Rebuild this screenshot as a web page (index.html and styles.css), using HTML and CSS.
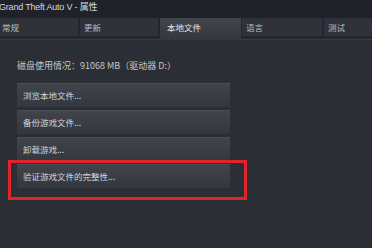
FILE: index.html
```html
<!DOCTYPE html>
<html>
<head>
<meta charset="utf-8">
<link rel="stylesheet" href="styles.css">
</head>
<body>
<div class="win">
  <div class="titlebar">Grand Theft Auto V - 属性</div>
  <div class="tabs">
    <div class="tab t1">常规</div>
    <div class="tab t2">更新</div>
    <div class="tab active">本地文件</div>
    <div class="tab t4">语言</div>
    <div class="tab t5">测试</div>
  </div>
  <div class="content">
    <div class="usage">磁盘使用情况：91068 MB（驱动器 D:）</div>
    <div class="btns">
      <div class="btn">浏览本地文件...</div>
      <div class="btn">备份游戏文件...</div>
      <div class="btn">卸载游戏...</div>
      <div class="btn">验证游戏文件的完整性...</div>
    </div>
    <div class="highlight"></div>
  </div>
</div>
</body>
</html>
```

FILE: styles.css
```css
html, body {
  margin: 0;
  padding: 0;
  background: #2b2e34;
  font-family: "Noto Sans CJK SC", "Liberation Sans", sans-serif;
  color: #c8cbd0;
}
.win {
  width: 372px;
  height: 248px;
  overflow: hidden;
  background: #2b2e34;
  position: relative;
}
.titlebar {
  height: 18px;
  line-height: 15px;
  background: #1f2228;
  font-family: "Liberation Sans", "Noto Sans CJK SC", sans-serif;
  font-size: 9px;
  letter-spacing: -0.2px;
  color: #d4d7dc;
  margin-left: -1px;
  white-space: nowrap;
}
.tabs {
  display: flex;
  height: 22px;
  background: #24272c;
  border-bottom: 1px solid #3a3d43;
  box-sizing: border-box;
}
.tab {
  height: 18px;
  box-sizing: border-box;
  background: #2f3238;
  border-right: 2px solid #24272c;
  font-size: 8.5px;
  line-height: 19px;
  padding-left: 4px;
  color: #b9bcc2;
  white-space: nowrap;
}
.t1 { width: 80px; padding-left: 2px; }
.t2 { width: 80px; }
.active {
  width: 81px;
  height: 22px;
  background: linear-gradient(#41454c, #34373d);
  color: #e2e4e8;
  padding-left: 7px;
  border-right: none;
  margin-right: 1px;
}
.t4 { width: 82px; }
.t5 { flex: 1; border-right: none; padding-left: 4px; }
.content {
  padding: 20px 0 0 17px;
}
.usage {
  font-size: 9px;
  line-height: 12px;
  color: #c3c6cb;
  white-space: nowrap;
}
.btns {
  margin-top: 11px;
  display: flex;
  flex-direction: column;
  gap: 3px;
}
.btn {
  width: 213px;
  height: 24px;
  box-sizing: border-box;
  background: linear-gradient(#40444b, #34373d);
  border-top: 1px solid #4a4e55;
  font-size: 8.5px;
  line-height: 22px;
  padding-left: 6px;
  color: #d2d4d8;
  white-space: nowrap;
}
.highlight {
  position: absolute;
  left: 8px;
  top: 160px;
  width: 239px;
  height: 40px;
  box-sizing: border-box;
  border: 3px solid #e0242c;
}
```
